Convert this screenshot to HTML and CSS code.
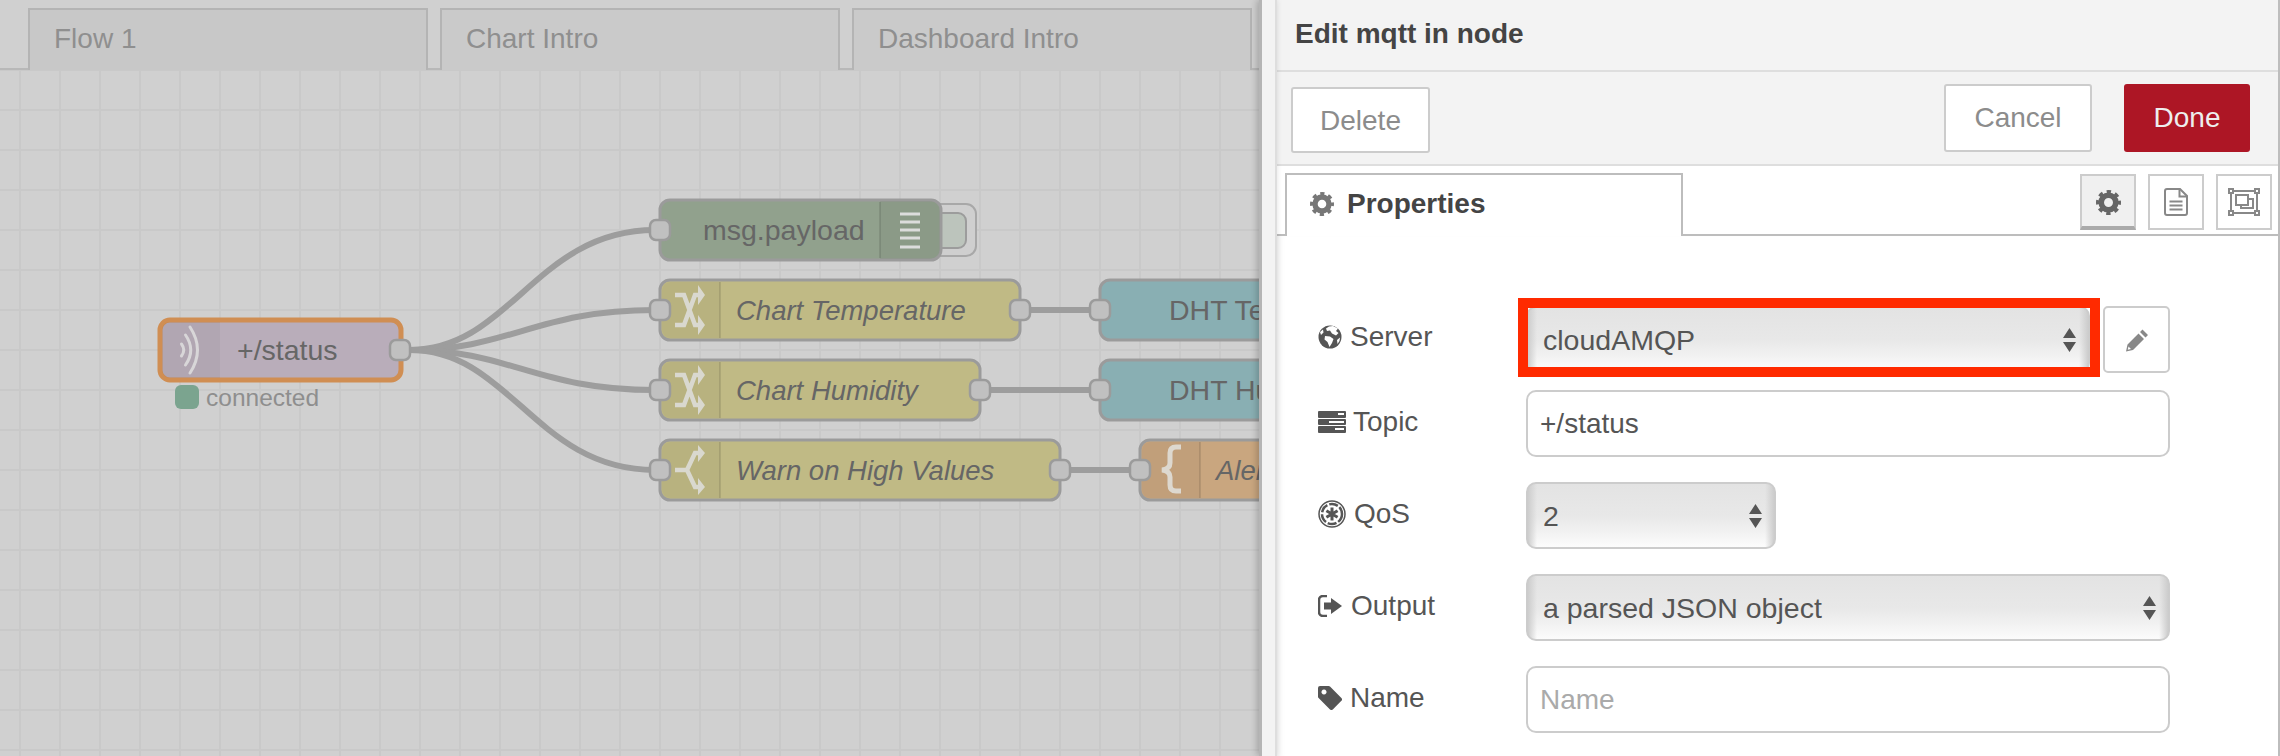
FILE: index.html
```html
<!DOCTYPE html>
<html lang="en">
<head>
<meta charset="utf-8">
<title>Edit mqtt in node</title>
<link rel="stylesheet" href="styles.css">
</head>
<body>
<svg class="defs" width="0" height="0" aria-hidden="true">
  <symbol id="gear" viewBox="0 0 24 24">
    <circle cx="12" cy="12" r="7" fill="none" stroke="currentColor" stroke-width="5.4"/>
    <circle cx="12" cy="12" r="10.4" fill="none" stroke="currentColor" stroke-width="3.2" stroke-dasharray="4.2 3.97" stroke-dashoffset="2.1"/>
  </symbol>
  <symbol id="updown" viewBox="0 0 13 24">
    <path d="M6.5 0 13 10H0zM0 14h13L6.5 24z" fill="#555"/>
  </symbol>
</svg>
<div class="app">
  <main class="workspace">
    <nav class="flow-tabs">
      <div class="flow-tab flow-tab-active">Flow 1</div>
      <div class="flow-tab">Chart Intro</div>
      <div class="flow-tab">Dashboard Intro</div>
    </nav>
    <div class="canvas">
      <svg class="flow" width="1259" height="686" viewBox="0 70 1259 686">
        <g class="wires">
          <path d="M410 350C510 350 536 230 655 230"/>
          <path d="M410 350C510 350 536 310 655 310"/>
          <path d="M410 350C510 350 536 390 655 390"/>
          <path d="M410 350C510 350 536 470 655 470"/>
          <path d="M1030 310H1090"/>
          <path d="M990 390H1090"/>
          <path d="M1070 470H1130"/>
        </g>

        <rect class="tail-outer" x="920" y="204" width="56" height="52" rx="10"/>
        <rect class="tail-inner" x="920" y="213" width="46" height="35" rx="8"/>
        <rect class="node node-debug" x="660" y="200" width="281" height="60" rx="10"/>
        <path class="shade" d="M880 201H930a10 10 0 0 1 10 10v38a10 10 0 0 1-10 10H880z"/>
        <path class="divider" d="M880 202V258"/>
        <path class="lines" d="M900 214H920M900 222H920M900 230H920M900 238H920M900 247H920"/>
        <rect class="port" x="650" y="220" width="20" height="20" rx="6"/>
        <text class="label" x="703" y="240">msg.payload</text>

        <rect class="node node-mqtt" x="160" y="320" width="241" height="60" rx="10"/>
        <path class="shade" d="M220 322H170a8 8 0 0 0-8 8v40a8 8 0 0 0 8 8H220z"/>
        <path class="waves" d="M190 327Q205 350 190 373M185.500 335Q196 350 185.500 365M181.500 344Q186 350 181.500 356"/>
        <text class="label" x="237" y="360">+/status</text>
        <rect class="port" x="390" y="340" width="20" height="20" rx="6"/>
        <rect class="status-dot" x="175" y="385" width="24" height="24" rx="6"/>
        <text class="status" x="206" y="406">connected</text>

        <rect class="node node-switch" x="660" y="280" width="360" height="60" rx="10"/>
        <path class="shade" d="M720 282H670a8 8 0 0 0-8 8v40a8 8 0 0 0 8 8H720z"/>
        <path class="divider" d="M720 282V338"/>
        <path class="icon-line" d="M675 295H684L695 325H699M675 325H684L695 295H699"/>
        <path class="icon-fill" d="M698 285 705 295 698 305zM698 315 705 325 698 335z"/>
        <rect class="port" x="650" y="300" width="20" height="20" rx="6"/>
        <rect class="port" x="1010" y="300" width="20" height="20" rx="6"/>
        <text class="label-italic" x="736" y="320">Chart Temperature</text>

        <rect class="node node-switch" x="660" y="360" width="320" height="60" rx="10"/>
        <path class="shade" d="M720 362H670a8 8 0 0 0-8 8v40a8 8 0 0 0 8 8H720z"/>
        <path class="divider" d="M720 362V418"/>
        <path class="icon-line" d="M675 375H684L695 405H699M675 405H684L695 375H699"/>
        <path class="icon-fill" d="M698 365 705 375 698 385zM698 395 705 405 698 415z"/>
        <rect class="port" x="650" y="380" width="20" height="20" rx="6"/>
        <rect class="port" x="970" y="380" width="20" height="20" rx="6"/>
        <text class="label-italic" x="736" y="400">Chart Humidity</text>

        <rect class="node node-switch" x="660" y="440" width="400" height="60" rx="10"/>
        <path class="shade" d="M720 442H670a8 8 0 0 0-8 8v40a8 8 0 0 0 8 8H720z"/>
        <path class="divider" d="M720 442V498"/>
        <path class="icon-line" d="M675 470H687L695 453H699M687 470 695 487H699"/>
        <path class="icon-fill" d="M698 445 705 453 698 462zM698 478 705 487 698 495z"/>
        <rect class="port" x="650" y="460" width="20" height="20" rx="6"/>
        <rect class="port" x="1050" y="460" width="20" height="20" rx="6"/>
        <text class="label-italic" x="736" y="480">Warn on High Values</text>

        <rect class="node node-chart" x="1100" y="280" width="320" height="60" rx="10"/>
        <rect class="port" x="1090" y="300" width="20" height="20" rx="6"/>
        <text class="label" x="1169" y="320">DHT Temperature</text>

        <rect class="node node-chart" x="1100" y="360" width="320" height="60" rx="10"/>
        <rect class="port" x="1090" y="380" width="20" height="20" rx="6"/>
        <text class="label" x="1169" y="400">DHT Humidity</text>

        <rect class="node node-template" x="1140" y="440" width="320" height="60" rx="10"/>
        <path class="shade" d="M1200 442H1150a8 8 0 0 0-8 8v40a8 8 0 0 0 8 8H1200z"/>
        <path class="divider" d="M1200 442V498"/>
        <path class="brace" d="M1181 447H1176Q1170 447 1170 453V463Q1170 469 1162 470Q1170 471 1170 477V485Q1170 491 1176 491H1181"/>
        <rect class="port" x="1130" y="460" width="20" height="20" rx="6"/>
        <text class="label-italic" x="1216" y="480">Alert Message</text>
      </svg>
    </div>
  </main>

  <div class="handle"></div>

  <section class="panel">
    <header class="panel-head">Edit mqtt in node</header>
    <div class="panel-actions">
      <button class="btn btn-delete" type="button">Delete</button>
      <button class="btn btn-cancel" type="button">Cancel</button>
      <button class="btn btn-done" type="button">Done</button>
    </div>
    <div class="panel-tabs">
      <div class="panel-tab">
        <svg class="tab-gear" width="24" height="24"><use href="#gear"/></svg>
        <span>Properties</span>
      </div>
      <div class="tab-buttons">
        <div class="tab-btn tab-btn-active">
          <svg class="gear-small" width="25" height="25"><use href="#gear"/></svg>
        </div>
        <div class="tab-btn">
          <svg width="24" height="28" viewBox="0 0 24 28" class="outline-icon">
            <path d="M1 3a2 2 0 0 1 2-2h13l7 7v17a2 2 0 0 1-2 2H3a2 2 0 0 1-2-2z"/>
            <path d="M15.500 1v7.500H23M5.500 13.500H18.500M5.500 17.500H18.500M5.500 21.500H18.500"/>
          </svg>
        </div>
        <div class="tab-btn">
          <svg width="32" height="28" viewBox="0 0 32 28" class="outline-icon">
            <path d="M4 3H28M4 25H28M3 5V23M29 5V23"/>
            <rect x="1" y="1" width="4" height="4"/><rect x="27" y="1" width="4" height="4"/>
            <rect x="1" y="23" width="4" height="4"/><rect x="27" y="23" width="4" height="4"/>
            <rect x="8" y="7" width="12" height="10"/>
            <path d="M20 11H25V20H13V17"/>
          </svg>
        </div>
      </div>
    </div>
    <form class="form">
      <div class="row row-first">
        <label class="field-label label-server">
          <svg class="icon" width="24" height="24" viewBox="0 0 24 24">
            <circle cx="12" cy="12" r="11.500"/>
            <path class="cut" d="M11 1.500 15 1 20 3.500 18 6 20.500 8 18 10.500 14 8.500 12 5.500 9 6 8 3.500zM7 11 12 11.500 15.500 14 14 18 11.500 22 9.500 17 6.500 14.500zM2 7 5 4.500 5.500 7.500 3 10zM19 15 22 12.500 21.500 16 19.500 19z"/>
          </svg>
          <span>Server</span>
        </label>
        <div class="select-wrap select-server">
          <select class="select"><option>cloudAMQP</option></select>
          <svg class="arrows" width="13" height="24"><use href="#updown"/></svg>
          <span class="highlight"></span>
        </div>
        <button class="btn-pencil" type="button" aria-label="Edit server">
          <svg width="24" height="24" viewBox="0 0 24 24">
            <path d="M17.500 1.500 23 7 20.500 9.500 15 4zM13.500 5.500 19 11 8 22 1 23.500 2.500 16.500zM3.500 18.500 2.800 21.700 6 21z" fill="#888" fill-rule="evenodd"/>
          </svg>
        </button>
      </div>
      <div class="row">
        <label class="field-label label-topic">
          <svg class="icon" width="28" height="22" viewBox="0 0 28 22">
            <path d="M0 1a1 1 0 0 1 1-1h26a1 1 0 0 1 1 1v5a1 1 0 0 1-1 1H1a1 1 0 0 1-1-1zM0 9a1 1 0 0 1 1-1h26a1 1 0 0 1 1 1v4a1 1 0 0 1-1 1H1a1 1 0 0 1-1-1zM0 16a1 1 0 0 1 1-1h26a1 1 0 0 1 1 1v5a1 1 0 0 1-1 1H1a1 1 0 0 1-1-1z"/>
            <path class="cut" d="M20 2h6v2h-6zM11 10h15v2H11zM17 17h9v2h-9z"/>
          </svg>
          <span>Topic</span>
        </label>
        <input class="input" type="text" value="+/status">
      </div>
      <div class="row">
        <label class="field-label">
          <svg class="icon" width="28" height="28" viewBox="0 0 28 28">
            <circle class="ring" cx="14" cy="14" r="13"/>
            <circle class="ring-dash" cx="14" cy="14" r="10"/>
            <path class="star" d="M14 7.500V20.500M8.400 10.750 19.600 17.250M8.400 17.250 19.600 10.750"/>
          </svg>
          <span>QoS</span>
        </label>
        <div class="select-wrap select-short">
          <select class="select"><option>2</option></select>
          <svg class="arrows" width="13" height="24"><use href="#updown"/></svg>
        </div>
      </div>
      <div class="row">
        <label class="field-label label-output">
          <svg class="icon" width="24" height="22" viewBox="0 0 24 22">
            <path d="M9 1H5a4 4 0 0 0-4 4v12a4 4 0 0 0 4 4h4" class="bracket"/>
            <path d="M13 3 24 11 13 19V14.500H6V7.500H13z"/>
          </svg>
          <span>Output</span>
        </label>
        <div class="select-wrap select-full">
          <select class="select"><option>a parsed JSON object</option></select>
          <svg class="arrows" width="13" height="24"><use href="#updown"/></svg>
        </div>
      </div>
      <div class="row">
        <label class="field-label">
          <svg class="icon" width="24" height="24" viewBox="0 0 24 24">
            <path d="M0 2a2 2 0 0 1 2-2h8.500a2 2 0 0 1 1.500.6L23.400 12a2 2 0 0 1 0 2.800L14.800 23.400a2 2 0 0 1-2.800 0L.6 12A2 2 0 0 1 0 10.500zM6 3.500a2.500 2.500 0 1 0 .01 0z" fill-rule="evenodd"/>
          </svg>
          <span>Name</span>
        </label>
        <input class="input" type="text" placeholder="Name">
      </div>
    </form>
  </section>
</div>
</body>
</html>
```

FILE: styles.css
```css
* { box-sizing: border-box; }
html, body { margin: 0; height: 100%; overflow: hidden; }
body { font-family: "Liberation Sans", Arial, sans-serif; background: #fff; }
.defs { position: absolute; }

.app { display: flex; width: 2280px; height: 756px; }

/* workspace */
.workspace { width: 1259px; height: 756px; display: flex; flex-direction: column; overflow: hidden; background: #d0d0d0; }
.flow-tabs { height: 70px; flex: none; display: flex; gap: 12px; padding: 8px 0 0 28px; border-bottom: 2px solid #b8b8b8; background: #d0d0d0; }
.flow-tab { width: 400px; height: 62px; border: 2px solid #b4b4b4; border-bottom: 0; background: #cacaca; color: #8f8f8f; font-size: 28px; line-height: 57px; padding-left: 24px; }
.flow-tab-active { background: #c8c8c8; }
.canvas { flex: 1; background-color: #d0d0d0; background-image: linear-gradient(90deg, #c9c9c9 2px, transparent 2px), linear-gradient(180deg, #c9c9c9 2px, transparent 2px); background-size: 40px 40px; background-position: 19px 39px; }
.flow { display: block; }
.wires path { fill: none; stroke: #9d9d9d; stroke-width: 6px; }
.node { stroke: #9b9b9b; stroke-width: 3px; }
.node-debug { fill: #91a18d; }
.node-mqtt { fill: #b9adba; stroke: #d08e53; stroke-width: 5px; }
.node-switch { fill: #c0ba85; }
.node-chart { fill: #89afb3; }
.node-template { fill: #c9a67f; }
.shade { fill: rgba(0, 0, 0, .04); }
.divider { stroke: rgba(0, 0, 0, .1); stroke-width: 2px; fill: none; }
.port { fill: #c0c0c0; stroke: #9b9b9b; stroke-width: 2.5px; }
.label { font-family: "Liberation Sans", Arial, sans-serif; font-size: 28.500px; fill: #666; }
.label-italic { font-family: "Liberation Sans", Arial, sans-serif; font-size: 27.500px; font-style: italic; fill: #666; }
.status { font-family: "Liberation Sans", Arial, sans-serif; font-size: 24.500px; fill: #8e8e8e; }
.status-dot { fill: #7ba48f; }
.tail-outer { fill: #cfcfcf; stroke: #a8a8a8; stroke-width: 2px; }
.tail-inner { fill: #bcc4bc; stroke: #9c9c9c; stroke-width: 2px; }
.lines { stroke: #dcdcdc; stroke-width: 3px; fill: none; }
.waves { fill: none; stroke: #d8d6d8; stroke-width: 3px; stroke-linecap: round; }
.icon-line { fill: none; stroke: #d9d8cf; stroke-width: 4.500px; }
.icon-fill { fill: #d9d8cf; }
.brace { fill: none; stroke: #ddd8cf; stroke-width: 5px; }

/* handle */
.handle { width: 18px; flex: none; background: #f3f3f3; border-left: 3px solid #b5b5b5; border-right: 2px solid #dedede; box-shadow: -2px 0 7px rgba(0, 0, 0, .22); position: relative; }

/* panel */
.panel { flex: 1; display: flex; flex-direction: column; border-right: 2px solid #bdbdbd; background: #fff; }
.panel-head { height: 72px; flex: none; padding-left: 18px; background: #f3f3f3; border-bottom: 2px solid #dedede; color: #444; font-size: 28px; font-weight: bold; line-height: 68px; }
.panel-actions { height: 94px; flex: none; display: flex; align-items: flex-start; gap: 32px; padding: 12px 28px 0 14px; background: #f3f3f3; border-bottom: 2px solid #dedede; }
.btn { height: 68px; border-radius: 3px; font-family: inherit; font-size: 28px; padding: 0; }
.btn-delete { width: 139px; height: 66px; margin-top: 3px; margin-right: auto; padding-top: 2px; background: #fff; border: 2px solid #ccc; color: #8c8c8c; }
.btn-cancel { width: 148px; background: #fff; border: 2px solid #ccc; color: #8c8c8c; }
.btn-done { width: 126px; background: #ad1625; border: 0; color: #eee; }

.panel-tabs { height: 70px; flex: none; display: flex; justify-content: space-between; padding: 0 6px 0 8px; border-bottom: 2px solid #bdbdbd; }
.panel-tab { width: 398px; height: 63px; margin-top: 7px; display: flex; align-items: center; gap: 13px; padding: 0 0 4px 23px; background: #fff; border: 2px solid #bdbdbd; border-bottom: 0; font-size: 28px; font-weight: bold; color: #444; }
.tab-gear { color: #777; }
.tab-buttons { display: flex; gap: 12px; margin-top: 8px; }
.tab-btn { width: 56px; height: 56px; display: flex; align-items: center; justify-content: center; border: 2px solid #ccc; background: #fff; }
.tab-btn-active { background: #f0f0f0; border-bottom: 4px solid #aaa; color: #666; }
.gear-small { margin-top: 2px; }
.outline-icon { fill: none; stroke: #888; stroke-width: 2px; }

/* form */
.form { flex: 1; padding: 70px 0 0 41px; box-shadow: inset 7px 0 7px -5px rgba(0, 0, 0, .07); }
.row { display: flex; height: 67px; margin-bottom: 25px; align-items: center; }
.row-first { margin-bottom: 17px; }
.field-label { width: 208px; flex: none; display: flex; align-items: center; gap: 8px; padding-bottom: 3px; color: #555; font-size: 28px; }
.label-server { padding-bottom: 6px; }
.label-topic { gap: 7px; padding-bottom: 4px; }
.label-output { gap: 9px; }
.icon { fill: #555; flex: none; }
.cut { fill: #fff; }
.bracket { fill: none; stroke: #555; stroke-width: 2.500px; }
.ring { fill: none; stroke: #555; stroke-width: 1.500px; }
.ring-dash { fill: none; stroke: #555; stroke-width: 2.500px; stroke-dasharray: 9 2; }
.star { fill: none; stroke: #555; stroke-width: 3px; }

.input { width: 644px; height: 67px; padding: 0 0 0 12px; border: 2px solid #ccc; border-radius: 10px; background: #fff; color: #555; font-family: inherit; font-size: 28px; outline: 0; }
.input::placeholder { color: #aaa; opacity: 1; }

.select-wrap { position: relative; height: 67px; flex: none; }
.select-server { width: 564px; }
.select-short { width: 250px; }
.select-full { width: 644px; }
.select { display: block; width: 100%; height: 100%; padding: 0 0 0 15px; appearance: none; -webkit-appearance: none; border: 2px solid #ccc; border-radius: 10px; color: #555; font-family: inherit; font-size: 28.500px; outline: 0;
  background: linear-gradient(90deg, #cdcdcd, rgba(205, 205, 205, 0) 9px, rgba(205, 205, 205, 0) calc(100% - 9px), #cdcdcd), linear-gradient(180deg, #e3e3e3, #e8e8e8 50%, #f1f1f1 75%, #fcfcfc); }
.arrows { position: absolute; top: 22px; right: 14px; }
.highlight { position: absolute; top: -8px; right: -10px; bottom: -4px; left: -8px; border: 10px solid #ff2a00; }
.btn-pencil { width: 67px; height: 67px; margin-left: 13px; padding: 0; display: flex; align-items: center; justify-content: center; background: #fff; border: 2px solid #ccc; border-radius: 5px; }
```
